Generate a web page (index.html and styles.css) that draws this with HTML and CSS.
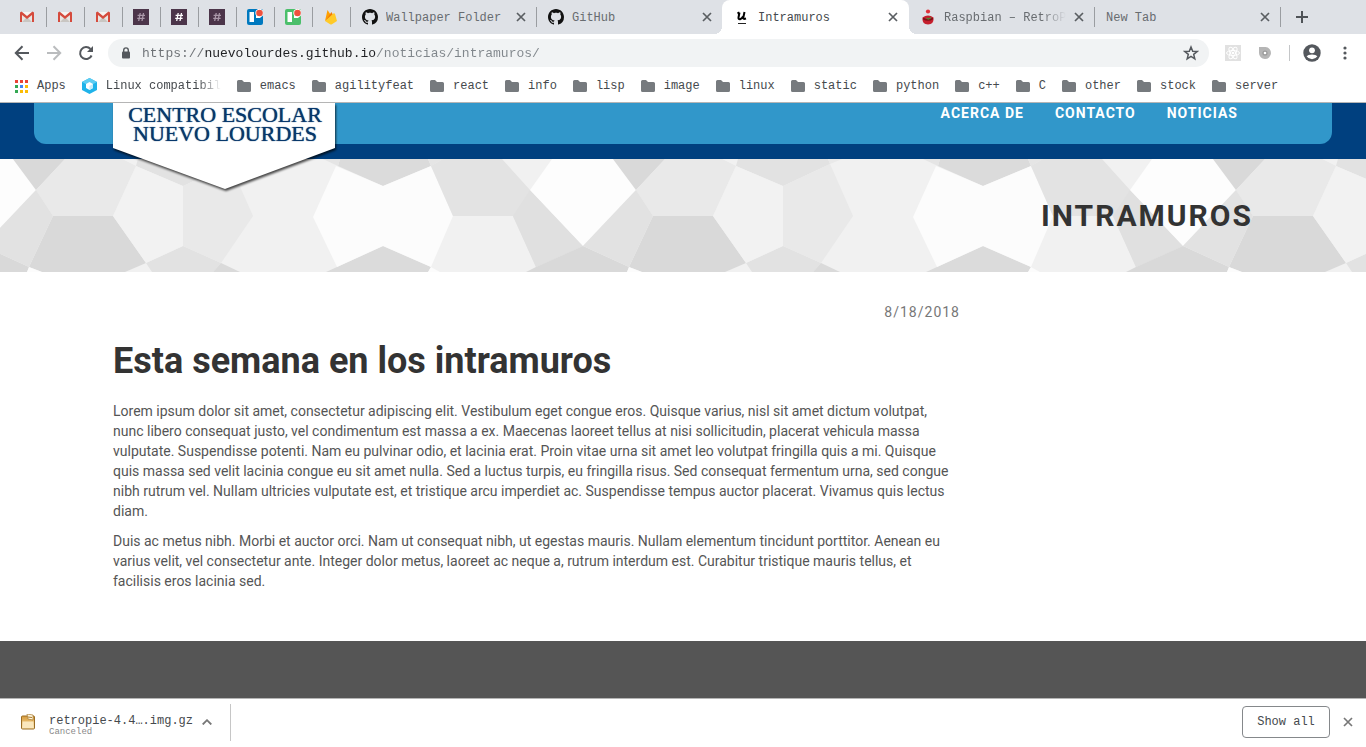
FILE: index.html
```html
<!DOCTYPE html>
<html lang="es">
<head>
<meta charset="utf-8">
<title>Intramuros</title>
<link rel="stylesheet" href="styles.css">
</head>
<body>
<svg class="defs" aria-hidden="true">
  <defs>
    <symbol id="gmail" viewBox="0 0 16 16"><path fill="#e8e6e3" d="M2 3h12v10H2z"/><path fill="#c9c6c2" d="M3 13l5-5 5 5z"/><path fill="#f6f4f2" d="M3 3h10L8 8z"/><path fill="#d54b3d" d="M1 3.500L2.500 2.500 8 7l5.500-4.500L15 3.500V13h-2V6L8 10 3 6v7H1z"/></symbol>
    <symbol id="slack" viewBox="0 0 16 16"><path fill="#4c354a" d="M0 0h16v16H0z"/><path fill="none" stroke="currentColor" stroke-width="1.300" d="M7.200 4L5.700 12M10.500 4L9 12M4.600 6.400h7.400M4.200 9.400h7.400"/></symbol>
    <symbol id="trello" viewBox="0 0 16 16"><rect width="16" height="16" rx="2" fill="currentColor"/><path fill="#fff" d="M2.500 3H7v10H2.500zM9 3h4.500v6H9z"/><circle cx="12.500" cy="4" r="4.200" fill="#fff"/><circle cx="12.500" cy="4" r="3.300" fill="#f0513d"/></symbol>
    <symbol id="github" viewBox="0 0 16 16"><path fill="#111" d="M8 0C3.580 0 0 3.580 0 8c0 3.540 2.290 6.530 5.470 7.590.4.070.55-.17.55-.38 0-.19-.01-.82-.01-1.490-2.010.37-2.530-.49-2.690-.94-.09-.23-.48-.94-.82-1.130-.28-.15-.68-.52-.01-.53.63-.01 1.080.58 1.230.82.72 1.210 1.870.87 2.330.66.070-.52.28-.87.51-1.070-1.780-.2-3.640-.89-3.640-3.950 0-.87.31-1.590.82-2.150-.08-.2-.36-1.020.08-2.120 0 0 .67-.21 2.200.82.64-.18 1.320-.27 2-.27s1.360.09 2 .27c1.530-1.040 2.200-.82 2.200-.82.44 1.100.16 1.920.08 2.120.51.56.82 1.270.82 2.150 0 3.070-1.870 3.750-3.650 3.950.29.25.54.73.54 1.480 0 1.070-.01 1.930-.01 2.200 0 .21.15.46.55.38A8.010 8.010 0 0 0 16 8c0-4.420-3.580-8-8-8z"/></symbol>
    <symbol id="close" viewBox="0 0 10 10"><path fill="none" stroke="currentColor" stroke-width="1.700" d="M1 1l8 8M9 1L1 9"/></symbol>
    <symbol id="folder" viewBox="0 0 14 12"><path fill="#767a7e" d="M1.500 0H5l2 2h5.500A1.500 1.500 0 0 1 14 3.500v7a1.500 1.500 0 0 1-1.500 1.500h-11A1.500 1.500 0 0 1 0 10.500v-9A1.500 1.500 0 0 1 1.500 0z"/></symbol>
    <g id="facets">
      <path fill="#f1f1f1" d="M300 0h600v113H300z"/>
      <path fill="#dbdbdb" d="M340 0h88l3 7-48 20-45-20zM326 113l11-5 46-21 48 21-3 5z"/>
      <path fill="#e5e5e5" d="M323 0h17l-2 7zM428 0h15l-12 7z"/>
      <path fill="#fcfcfc" d="M336 7l47 20 48-20 22 50-22 51-48-21-46 21-24-50zM431 108l9 5h-12z"/>
      <path fill="#e3e3e3" d="M443 0h59l28 31 53 56-47 21-23-51h-60L431 7z"/>
      <path fill="#e0e0e0" d="M530 31l53 56-47 21-23-51z"/>
      <path fill="#fdfdfd" d="M552 0h61l23 31-53 56-53-56z"/>
      <path fill="#d9d9d9" d="M613 0h52l-29 31zM583 87l46 21-2 5H526l10-5zM653 57h60l33 47-21 9h-83l-13-5z"/>
      <path fill="#fcfcfc" d="M629 108l13 5h-15z"/>
      <path fill="#e9e9e9" d="M665 0h57l14 7-23 50h-60l-17-26z"/>
      <path fill="#e2e2e2" d="M636 31l17 26-24 51-46-21zM738 0h90l2 5-47 22-47-20zM783 87l38 17-8 9h-61l-6-9z"/>
      <path fill="#f2f2f2" d="M736 7l47 20v60l-37 17-33-47z"/>
      <path fill="#e9e9e9" d="M783 27l47-22 23 52-32 47-38-17zM828 0h14l-12 5z"/>
      <path fill="#dadada" d="M821 104l19 9h-27z"/>
    </g>
    <pattern id="facet-tile" width="600" height="113" patternUnits="userSpaceOnUse"><use href="#facets" x="-600"/><use href="#facets"/></pattern>
    <linearGradient id="box" x2="0" y2="1"><stop stop-color="#d79b3c"/><stop offset="1" stop-color="#fbe3a8"/></linearGradient>
  </defs>
</svg>
<div class="browser">
  <header class="chrome">
    <div class="tabstrip">
      <button class="pin" aria-label="Gmail"><svg class="fav"><use href="#gmail"/></svg></button>
      <button class="pin" aria-label="Gmail"><svg class="fav"><use href="#gmail"/></svg></button>
      <button class="pin" aria-label="Gmail"><svg class="fav"><use href="#gmail"/></svg></button>
      <button class="pin slack" aria-label="Slack"><svg class="fav"><use href="#slack"/></svg></button>
      <button class="pin slack unread" aria-label="Slack"><svg class="fav"><use href="#slack"/></svg></button>
      <button class="pin slack" aria-label="Slack"><svg class="fav"><use href="#slack"/></svg></button>
      <button class="pin trello-blue" aria-label="Trello"><svg class="fav"><use href="#trello"/></svg></button>
      <button class="pin trello-green" aria-label="Trello"><svg class="fav"><use href="#trello"/></svg></button>
      <button class="pin" aria-label="Firebase"><svg class="fav" viewBox="0 0 16 16"><path fill="#ffa000" d="M2 12L4.500 1l3 4.500z"/><path fill="#f57c00" d="M2 12L8.500 3l2 4z"/><path fill="#ffca28" d="M2 12l9-8 1 1 2 7-5.500 3.500H7.500z"/></svg></button>
      <div class="tab"><svg class="fav"><use href="#github"/></svg><span class="tab-title">Wallpaper Folder</span><button class="close" aria-label="Close tab"><svg><use href="#close"/></svg></button></div>
      <div class="tab before-active"><svg class="fav"><use href="#github"/></svg><span class="tab-title">GitHub</span><button class="close" aria-label="Close tab"><svg><use href="#close"/></svg></button></div>
      <div class="tab active"><svg class="fav" viewBox="0 0 16 16"><path fill="none" stroke="#000" stroke-width="2" d="M5.500 3.500L4.500 8.500Q4.300 10.500 6 10.300Q8 9.500 9 7.500M10.500 3L9.200 9Q9 10.500 12 9.500M3.500 4.500l2-1"/><path stroke="#222" d="M4 14.500h8"/></svg><span class="tab-title">Intramuros</span><button class="close" aria-label="Close tab"><svg><use href="#close"/></svg></button></div>
      <div class="tab"><svg class="fav" viewBox="0 0 16 16"><circle cx="8" cy="2.500" r="2.100" fill="#e0303a"/><path fill="#c51f2d" d="M2.500 8.500Q8 4.500 13.500 8.500Q14 15.500 8 15.500T2.500 8.500z"/><path fill="none" stroke="#7d1018" stroke-width="1.500" d="M3 9.500q5 3 10 0"/><path fill="none" stroke="#4d8c35" stroke-width="1.200" d="M6.500 9l2 1 2.500-1.500"/></svg><span class="tab-title fade">Raspbian – RetroPie</span><button class="close" aria-label="Close tab"><svg><use href="#close"/></svg></button></div>
      <div class="tab plain"><span class="tab-title">New Tab</span><button class="close" aria-label="Close tab"><svg><use href="#close"/></svg></button></div>
      <button class="new-tab" aria-label="New tab"><svg viewBox="0 0 12 12"><path stroke="#4f5357" stroke-width="2" d="M6 0v12M0 6h12"/></svg></button>
    </div>
    <div class="toolbar">
      <button class="nav-btn" aria-label="Back"><svg viewBox="0 0 16 16"><path fill="none" stroke="#54585d" stroke-width="2" d="M15 8H2M8.500 1.300L1.800 8l6.700 6.700"/></svg></button>
      <button class="nav-btn" aria-label="Forward" disabled><svg viewBox="0 0 16 16"><path fill="none" stroke="#babcbe" stroke-width="2" d="M1 8h13M7.500 1.300L14.200 8l-6.700 6.700"/></svg></button>
      <button class="nav-btn" aria-label="Reload"><svg viewBox="0 0 16 16"><path fill="none" stroke="#54585d" stroke-width="2" d="M13.600 10.500A6 6 0 1 1 12.500 4"/><path fill="#54585d" d="M15 1v6H9z"/></svg></button>
      <div class="omnibox">
        <svg class="lock" viewBox="0 0 10 12"><rect x="1" y="4.500" width="8" height="7" rx="1" fill="#54585d"/><path fill="none" stroke="#54585d" stroke-width="1.400" d="M2.700 5V3.200a2.300 2.300 0 0 1 4.600 0V5"/></svg>
        <input class="url" aria-label="Address" value="https://nuevolourdes.github.io/noticias/intramuros/" spellcheck="false">
        <button class="star" aria-label="Bookmark"><svg viewBox="0 0 16 16"><path fill="none" stroke="#54585d" stroke-width="1.500" d="M8 2l1.700 4.200 4.500.3-3.500 2.900 1.100 4.400L8 11.400l-3.800 2.400 1.100-4.400L1.800 6.500l4.500-.3z"/></svg></button>
      </div>
      <button class="ext" aria-label="React tools"><svg viewBox="0 0 16 16"><path fill="#e1e1e1" d="M0 0h16v16H0z"/><g fill="none" stroke="#fff"><ellipse cx="8" cy="8" rx="6.500" ry="2.500"/><ellipse cx="8" cy="8" rx="6.500" ry="2.500" transform="rotate(60 8 8)"/><ellipse cx="8" cy="8" rx="6.500" ry="2.500" transform="rotate(120 8 8)"/></g><circle cx="8" cy="8" r="1.300" fill="#fff"/></svg></button>
      <button class="ext" aria-label="Extension"><svg viewBox="0 0 16 16"><path fill="#b5b5b5" d="M2 2h6.500a6 6 0 1 1-6.500 6z"/><circle cx="8" cy="8" r="2.600" fill="#999"/><circle cx="8" cy="8" r="1.300" fill="#fff"/></svg></button>
      <span class="divider"></span>
      <button class="profile" aria-label="Profile"><svg viewBox="0 0 18 18"><circle cx="9" cy="9" r="8.700" fill="#54585d"/><circle cx="9" cy="6.300" r="2.900" fill="#fff"/><path fill="#fff" d="M3.600 12.300Q5 10.400 9 10.400t5.400 1.900Q12.500 15.200 9 15.200T3.600 12.300z"/></svg></button>
      <button class="menu" aria-label="Menu"><svg viewBox="0 0 4 14"><g fill="#54585d"><circle cx="2" cy="2" r="1.600"/><circle cx="2" cy="7" r="1.600"/><circle cx="2" cy="12" r="1.600"/></g></svg></button>
    </div>
    <nav class="bookmarks" aria-label="Bookmarks">
      <a href="#" class="apps"><svg viewBox="0 0 13 13"><path fill="#ea4335" d="M0 0h3v3H0zM5 0h3v3H5zM10 0h3v3h-3z"/><path fill="#34a853" d="M0 5h3v3H0zM0 10h3v3H0z"/><path fill="#4285f4" d="M5 5h3v3H5z"/><path fill="#fbbc05" d="M10 5h3v3h-3zM5 10h3v3H5zM10 10h3v3h-3z"/></svg>Apps</a>
      <a href="#" class="linux"><svg viewBox="0 0 15 16"><path fill="#1fb3ea" d="M7.500 0L15 4v8l-7.500 4L0 12V4z"/><path fill="#5fcdf2" d="M7.500 0L15 4l-7.500 4L0 4z"/><path fill="#fff" d="M7.500 4l3.500 2v4l-3.500 2L4 10V6z"/><path fill="#c4ecfa" d="M7.500 8L11 6v4l-3.500 2z"/></svg><span class="fade">Linux compatibility</span></a>
      <a href="#"><svg><use href="#folder"/></svg>emacs</a>
      <a href="#"><svg><use href="#folder"/></svg>agilityfeat</a>
      <a href="#"><svg><use href="#folder"/></svg>react</a>
      <a href="#"><svg><use href="#folder"/></svg>info</a>
      <a href="#"><svg><use href="#folder"/></svg>lisp</a>
      <a href="#"><svg><use href="#folder"/></svg>image</a>
      <a href="#"><svg><use href="#folder"/></svg>linux</a>
      <a href="#"><svg><use href="#folder"/></svg>static</a>
      <a href="#"><svg><use href="#folder"/></svg>python</a>
      <a href="#"><svg><use href="#folder"/></svg>c++</a>
      <a href="#"><svg><use href="#folder"/></svg>C</a>
      <a href="#"><svg><use href="#folder"/></svg>other</a>
      <a href="#"><svg><use href="#folder"/></svg>stock</a>
      <a href="#"><svg><use href="#folder"/></svg>server</a>
    </nav>
  </header>

  <div class="page">
    <header class="site-header">
      <div class="site-bar"></div>
      <div class="container header-inner">
        <a href="#" class="logo">
          <svg class="logo-shape" viewBox="0 0 224 88"><path fill="#fff" d="M0 0h222v45L112 86 0 45z"/></svg>
          <span class="logo-text">CENTRO ESCOLAR<br>NUEVO LOURDES</span>
        </a>
        <nav class="site-nav"><a href="#">ACERCA DE</a><a href="#">CONTACTO</a><a href="#">NOTICIAS</a></nav>
      </div>
    </header>
    <section class="banner">
      <svg class="banner-art" aria-hidden="true"><rect width="100%" height="100%" fill="url(#facet-tile)"/></svg>
      <div class="container"><h2>INTRAMUROS</h2></div>
    </section>
    <main class="container">
      <article>
        <time datetime="2018-08-18">8/18/2018</time>
        <h1>Esta semana en los intramuros</h1>
        <p>Lorem ipsum dolor sit amet, consectetur adipiscing elit. Vestibulum eget congue eros. Quisque varius, nisl sit amet dictum volutpat, nunc libero consequat justo, vel condimentum est massa a ex. Maecenas laoreet tellus at nisi sollicitudin, placerat vehicula massa vulputate. Suspendisse potenti. Nam eu pulvinar odio, et lacinia erat. Proin vitae urna sit amet leo volutpat fringilla quis a mi. Quisque quis massa sed velit lacinia congue eu sit amet nulla. Sed a luctus turpis, eu fringilla risus. Sed consequat fermentum urna, sed congue nibh rutrum vel. Nullam ultricies vulputate est, et tristique arcu imperdiet ac. Suspendisse tempus auctor placerat. Vivamus quis lectus diam.</p>
        <p>Duis ac metus nibh. Morbi et auctor orci. Nam ut consequat nibh, ut egestas mauris. Nullam elementum tincidunt porttitor. Aenean eu varius velit, vel consectetur ante. Integer dolor metus, laoreet ac neque a, rutrum interdum est. Curabitur tristique mauris tellus, et facilisis eros lacinia sed.</p>
      </article>
    </main>
    <footer class="site-footer"></footer>
  </div>

  <footer class="downloads">
    <div class="download">
      <svg class="archive" viewBox="0 0 16 16"><rect x="1.500" y="2" width="13" height="13" rx="1" fill="url(#box)" stroke="#9a6d24"/><path fill="#fae7bd" d="M2.500 7.500h11V14h-11z"/><path fill="#fff6dc" stroke="#a87a30" stroke-width=".700" d="M7 0l6 1v5L8 5z"/><path stroke="#a87a30" d="M8 3l4 .5"/></svg>
      <div class="download-text"><span class="file">retropie-4.4….img.gz</span><span class="status">Canceled</span></div>
      <button class="expand" aria-label="Options"><svg viewBox="0 0 10 6"><path fill="none" stroke="#777" stroke-width="1.800" d="M.7 5.500L5 1.200l4.300 4.300"/></svg></button>
    </div>
    <button class="show-all">Show all</button>
    <button class="close-bar" aria-label="Close"><svg><use href="#close"/></svg></button>
  </footer>
</div>
</body>
</html>
```
FILE: styles.css
```css
* { box-sizing: border-box; }
body { margin: 0; font-family: Roboto, sans-serif; font-size: 14px; line-height: 20px; color: #555; background: #fff; }
button { border: 0; padding: 0; margin: 0; background: none; font: inherit; color: inherit; }
a { color: inherit; text-decoration: none; }
svg { display: block; flex: none; }
.defs { position: absolute; width: 0; height: 0; }
.browser { display: flex; flex-direction: column; height: 100vh; overflow: hidden; }

.chrome, .downloads { font-family: "Liberation Mono", monospace; font-size: 12px; line-height: 16px; color: #45494d; flex: none; }
.chrome { border-bottom: 1px solid #b5b5b5; }
.tabstrip { display: flex; height: 34px; padding-left: 8px; background: #dee1e6; }
.fav { width: 16px; height: 16px; }
.pin { display: flex; align-items: center; justify-content: center; flex: none; width: 38px; padding-right: 2px; position: relative; }
.pin:first-child { width: 39px; }
.pin::after, .tab::after { content: ""; position: absolute; right: 0; top: 7px; width: 1px; height: 20px; background: #9a9da1; }
.slack { color: #a997a8; }
.slack.unread { color: #fff; }
.trello-blue { color: #0079bf; }
.trello-green { color: #4bbf6b; }
.tab { position: relative; display: flex; align-items: center; gap: 8px; flex: 0 1 186px; min-width: 0; padding: 0 11px; color: #686c70; }
.tab-title { flex: 1; min-width: 0; padding-top: 1px; overflow: hidden; white-space: nowrap; }
.fade { overflow: hidden; white-space: nowrap; -webkit-mask-image: linear-gradient(to right, #000 80%, transparent); mask-image: linear-gradient(to right, #000 80%, transparent); }
.close { color: #5a5e62; }
.close svg { width: 10px; height: 10px; }
.tab.active { flex-basis: 187px; margin-left: -1px; padding-left: 12px; background: #fff; border-radius: 8px 8px 0 0; color: #45494d; z-index: 1; }
.tab.before-active::after { display: none; }
.tab.active::before, .tab.active::after { content: ""; position: absolute; top: auto; bottom: 0; width: 8px; height: 8px; }
.tab.active::before { left: -8px; background: radial-gradient(circle at 0 0, #dee1e6 8px, #fff 8px); }
.tab.active::after { right: -8px; background: radial-gradient(circle at 100% 0, #dee1e6 8px, #fff 8px); }
.new-tab { padding-left: 15px; }
.new-tab svg { width: 12px; height: 12px; }

.toolbar { display: flex; align-items: center; height: 37px; padding: 0 19px 0 14px; }
.nav-btn { margin-right: 16px; }
.nav-btn svg, .star svg, .ext svg { width: 16px; height: 16px; }
.omnibox { display: flex; align-items: center; flex: 1; height: 28px; margin-left: -2px; padding: 0 10px 0 13px; border-radius: 14px; background: #f1f3f4; }
.lock { width: 10px; height: 12px; }
.url { flex: 1; min-width: 0; margin-left: 11px; padding: 2px 0 0; border: 0; outline: 0; font: 13px/20px "Liberation Mono", monospace; background: linear-gradient(to right, #6c7074 8ch, #202124 8ch, #202124 30ch, #80868b 30ch); -webkit-background-clip: text; background-clip: text; -webkit-text-fill-color: transparent; }
.ext { margin-left: 16px; }
.divider { width: 1px; height: 16px; margin: 0 13px 0 16px; background: #c4c6c8; }
.profile svg { width: 18px; height: 18px; }
.menu { margin-left: 22px; }
.menu svg { width: 4px; height: 14px; }

.bookmarks { display: flex; align-items: center; gap: 16px; height: 31px; padding: 0 15px 1px; white-space: nowrap; overflow: hidden; }
.bookmarks a { display: flex; align-items: center; gap: 9px; flex: none; }
.bookmarks svg { width: 14px; height: 12px; }
.bookmarks .apps svg { width: 13px; height: 13px; }
.bookmarks .linux svg { width: 15px; height: 16px; }
.bookmarks .linux span { width: 115px; }

.page { flex: 1; min-height: 0; display: flex; flex-direction: column; overflow: hidden; }
.container { width: 100%; max-width: 1170px; margin: 0 auto; padding: 0 15px; }
.site-header { position: relative; flex: none; height: 56px; background: #00407f; z-index: 2; }
.site-bar { position: absolute; left: 34px; right: 34px; top: 0; height: 41px; border-radius: 0 0 12px 12px; background: #3197ca; }
.header-inner { position: relative; display: flex; justify-content: space-between; }
.logo { position: relative; width: 224px; }
.logo-shape { position: absolute; left: 0; top: 0; width: 224px; height: 88px; filter: drop-shadow(1px 2px 1px rgba(0, 0, 0, .7)); }
.logo-text { position: relative; display: block; padding-top: 2px; text-align: center; font: 22px/19px "Liberation Serif", serif; color: #08386b; text-shadow: 0 0 1px #08386b; }
.site-nav { display: flex; gap: 31px; padding-right: 15px; font-weight: 700; letter-spacing: 1px; color: #fff; }
.banner { position: relative; flex: none; height: 113px; overflow: hidden; }
.banner-art { position: absolute; width: 100%; height: 100%; }
.banner .container { position: relative; text-align: right; }
.banner h2 { margin: 0; padding-top: 40px; font-size: 30px; line-height: 33px; letter-spacing: 2px; color: #333; }
article { width: 75%; padding: 30px 8px 50px 0; }
time { display: block; text-align: right; letter-spacing: 1px; color: #777; }
h1 { margin: 19px 0 20px; font-size: 36px; line-height: 40px; color: #333; }
p { margin: 0 0 10px; padding-right: 8px; }
p:last-child { margin: 0; }
.site-footer { flex: 1; background: #555; }

.downloads { display: flex; align-items: center; height: 49px; padding: 0 13px 2px 0; border-top: 1px solid #b5b5b5; background: #fff; }
.download { display: flex; align-items: center; height: 37px; margin-right: auto; padding: 0 18px 0 20px; border-right: 1px solid #c6c6c6; }
.archive { width: 16px; height: 16px; margin-right: 13px; }
.download-text { display: flex; flex-direction: column; padding-top: 7px; }
.file { line-height: 13px; }
.status { font-size: 9px; line-height: 9px; color: #888; }
.expand { margin-left: 9px; }
.expand svg { width: 10px; height: 6px; }
.show-all { width: 88px; height: 32px; border: 1px solid #85888b; border-radius: 4px; }
.close-bar { margin-left: 13px; color: #777; }
.close-bar svg { width: 10px; height: 10px; }
```
